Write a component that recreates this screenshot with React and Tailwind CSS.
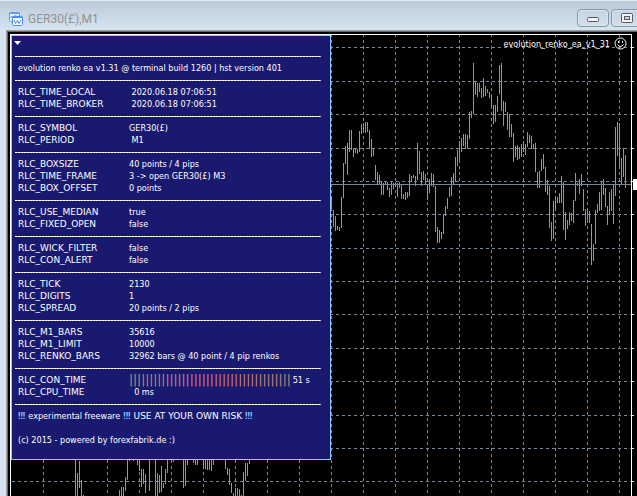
import { Fragment } from "react";

const GROUPS = [
  [
    ["RLC_TIME_LOCAL", " 2020.06.18 07:06:51"],
    ["RLC_TIME_BROKER", " 2020.06.18 07:06:51"],
  ],
  [
    ["RLC_SYMBOL", "GER30(£)"],
    ["RLC_PERIOD", " M1"],
  ],
  [
    ["RLC_BOXSIZE", "40 points / 4 pips"],
    ["RLC_TIME_FRAME", "3 -> open GER30(£) M3"],
    ["RLC_BOX_OFFSET", "0 points"],
  ],
  [
    ["RLC_USE_MEDIAN", "true"],
    ["RLC_FIXED_OPEN", "false"],
  ],
  [
    ["RLC_WICK_FILTER", "false"],
    ["RLC_CON_ALERT", "false"],
  ],
  [
    ["RLC_TICK", "2130"],
    ["RLC_DIGITS", "1"],
    ["RLC_SPREAD", "20 points / 2 pips"],
  ],
  [
    ["RLC_M1_BARS", "35616"],
    ["RLC_M1_LIMIT", "10000"],
    ["RLC_RENKO_BARS", "32962 bars @ 40 point / 4 pip renkos"],
  ],
  [
    ["RLC_CON_TIME", "51 s", 40],
    ["RLC_CPU_TIME", "  0 ms"],
  ],
];

// [high, low] of every M1 bar right of the panel, one bar each 2px
const BARS = [
  [197, 208], [210, 227], [216, 231], [226, 230], [227, 231], [197, 228], [163, 198], [146, 164],
  [143, 175], [130, 152], [130, 150], [148, 157], [148, 153], [149, 154], [131, 152], [124, 134],
  [123, 131], [122, 133], [122, 132], [130, 149], [139, 157], [149, 156], [165, 180], [172, 185],
  [175, 184], [181, 195], [183, 195], [182, 185], [182, 190], [188, 197], [182, 195], [183, 189],
  [182, 187], [183, 197], [182, 188], [185, 199], [194, 199], [192, 200], [192, 198], [174, 196],
  [176, 182], [175, 178], [176, 186], [143, 180], [151, 174], [172, 186], [171, 180], [174, 185],
  [185, 200], [179, 193], [173, 186], [174, 187], [186, 232], [227, 243], [230, 243], [232, 239],
  [214, 234], [206, 216], [198, 209], [187, 197], [177, 196], [173, 185], [157, 182], [150, 166],
  [141, 160], [138, 152], [134, 146], [134, 149], [135, 149], [112, 139], [111, 118], [63, 114],
  [81, 95], [83, 97], [83, 92], [88, 98], [78, 97], [86, 96], [89, 93], [92, 98],
  [95, 106], [105, 124], [105, 122], [96, 112], [65, 94], [63, 111], [101, 126], [102, 112],
  [112, 130], [114, 137], [124, 137], [133, 162], [146, 157], [145, 160], [147, 159], [144, 157],
  [141, 152], [144, 155], [132, 147], [135, 143], [136, 149], [144, 149], [143, 172], [172, 188],
  [171, 188], [159, 171], [154, 169], [167, 192], [180, 195], [186, 228], [222, 241], [201, 239],
  [197, 211], [197, 203], [193, 203], [176, 203], [182, 230], [212, 240], [220, 229], [212, 225],
  [213, 221], [200, 223], [173, 201], [183, 186], [179, 194], [174, 186], [189, 211], [209, 226],
  [209, 220], [211, 223], [224, 265], [244, 261], [210, 244], [204, 213], [192, 211], [182, 210],
  [179, 195], [188, 207], [206, 225], [192, 215], [189, 211], [184, 224], [127, 196], [122, 156],
  [123, 167], [158, 185], [148, 177], [155, 188],
];

// [x, high, low] of the bars that come out below the panel
const LOWER_BARS = [
  [75, 460, 500], [77, 473, 500], [79, 461, 488], [81, 480, 500], [83, 495, 500],
  [119, 490, 500], [121, 487, 500], [123, 487, 500], [125, 477, 491], [127, 455, 480],
  [129, 455, 461], [133, 455, 461], [137, 455, 465], [139, 455, 471], [141, 469, 487],
  [143, 469, 484], [145, 474, 493], [149, 455, 491], [155, 455, 500], [157, 473, 500],
  [159, 475, 493], [161, 466, 492], [163, 483, 488], [165, 469, 484], [167, 455, 473],
  [173, 455, 462], [183, 455, 488], [185, 455, 486], [187, 455, 465], [193, 455, 463],
  [195, 455, 465], [197, 455, 465], [203, 455, 469], [205, 455, 469], [207, 455, 470],
  [209, 455, 470], [211, 455, 471], [213, 455, 465], [225, 455, 469], [227, 468, 475],
  [229, 469, 485], [231, 483, 493], [233, 493, 500], [235, 488, 500], [237, 488, 500],
  [239, 489, 500], [241, 495, 500], [243, 472, 500], [245, 463, 481], [247, 463, 476],
  [249, 455, 464],
];

const GRID_X = [43, 75, 107, 139, 171, 203, 235, 267, 299, 331, 363, 395, 427, 459, 491, 523, 555, 587, 619];
const GRID_Y = [47, 81, 114, 148, 181, 214, 248, 281, 314, 348, 381, 415, 448, 481];
const PRICE_Y = 184;

// page position of the chart's top left corner, inside the white frame
const LEFT = 11;
const TOP = 35;

function ChartIcon() {
  return (
    <svg width="16" height="16" viewBox="0 0 16 16" fill="none" aria-hidden="true">
      <rect x="1.5" y="1.5" width="10" height="9" rx="1" fill="#e8f2ff" stroke="#5b9bf0" />
      <path d="M1 2.5h11" stroke="#5b9bf0" />
      <path d="M2.5 7l1.5-2 1.5 2 2-3 1.5 2" stroke="#5b9bf0" />
      <rect x="4.5" y="5.5" width="10" height="9" rx="1" fill="#f6faff" stroke="#4a8cec" />
      <path d="M4 6.5h11" stroke="#4a8cec" />
      <path d="M6 9l1.5 3.5 2-3 1.5 3 2-3.500" stroke="#4a8cec" />
    </svg>
  );
}

function WindowButton({ label, children }) {
  return (
    <button
      type="button"
      aria-label={label}
      className="flex h-[18px] w-8 shrink-0 items-center justify-center rounded-sm border border-[#8795ab] bg-linear-to-b from-[#c6d3e1] to-[#d3dfec] shadow-[inset_0_0_0_1px_#dae5f0]"
    >
      {children}
    </button>
  );
}

function TitleBar() {
  return (
    <header className="flex h-[30px] items-center border-t border-[#e3ebf3] bg-linear-to-b from-[#bccad9] to-[#d7e4f1] pt-1.5 pl-2">
      <ChartIcon />
      <h1 className="ml-1 flex-1 font-[Roboto,sans-serif] text-xs text-[#929292]">GER30(£),M1</h1>
      <div className="-mr-1.5 flex gap-0.5 pb-0.5">
        <WindowButton label="Minimize">
          <svg width="12" height="6" viewBox="0 0 12 6" className="mt-1">
            <rect x="0.5" y="0.5" width="11" height="4" rx="1" fill="#f4f4f4" stroke="#555a66" />
          </svg>
        </WindowButton>
        <WindowButton label="Maximize">
          <svg width="12" height="10" viewBox="0 0 12 10">
            <rect x="0.5" y="0.5" width="11" height="9" rx="1" fill="#f4f4f4" stroke="#555a66" />
            <rect x="3.5" y="3.5" width="5" height="3" fill="#c8d4e2" stroke="#555a66" />
          </svg>
        </WindowButton>
      </div>
    </header>
  );
}

function Bar({ x, high, low }) {
  return <rect x={x - LEFT} y={high - TOP} width="1" height={low - high} />;
}

function PriceChart() {
  return (
    <svg
      className="absolute inset-0 h-full w-full"
      shapeRendering="crispEdges"
      role="img"
      aria-label="GER30(£) M1 price chart"
    >
      <g stroke="#778899" strokeDasharray="3 3">
        {GRID_X.map((x) => (
          <line key={x} x1={x - LEFT + 0.5} x2={x - LEFT + 0.5} y1="-1" y2="100%" />
        ))}
        {GRID_Y.map((y) => (
          <line key={y} x1="1" x2="100%" y1={y - TOP + 0.5} y2={y - TOP + 0.5} />
        ))}
      </g>
      <g fill="#00ff00">
        {BARS.map(([high, low], i) => (
          <Bar key={i} x={331 + i * 2} high={high} low={low} />
        ))}
        {LOWER_BARS.map(([x, high, low]) => (
          <Bar key={x} x={x} high={high} low={low} />
        ))}
      </g>
      <rect x="0" y={PRICE_Y - TOP} width="100%" height="1" fill="#778899" />
    </svg>
  );
}

function PriceScale() {
  return (
    <svg className="w-[5px] shrink-0 self-stretch" shapeRendering="crispEdges" aria-hidden="true">
      {GRID_Y.map((y) => (
        <rect key={y} x="0" y={y - TOP + 1} width="2" height="1" fill="#fff" />
      ))}
      <rect x="1" y={PRICE_Y - TOP - 4} width="4" height="11" fill="#fff" />
    </svg>
  );
}

function Rule() {
  return (
    <div className="flex h-3 items-center pr-[9px] pl-[3px]">
      <hr className="h-px w-full border-0 bg-[repeating-linear-gradient(90deg,#fff_0_2px,#d0cabc_2px_3px)]" />
    </div>
  );
}

function Row({ label, value, ticks }) {
  return (
    <div className="flex h-3 items-center pl-1.5">
      <dt className="w-[111px] font-['DejaVu_Sans',sans-serif]">{label}</dt>
      <dd className="flex items-center">
        {ticks && (
          <span className="mr-0.5 font-['DejaVu_Sans',sans-serif] text-xs leading-3 text-[#d08878]">
            {"|".repeat(ticks)}
          </span>
        )}
        {value}
      </dd>
    </div>
  );
}

function Bangs() {
  return <span className="font-[Roboto,sans-serif] font-bold text-[#8cc8ff]">!!!</span>;
}

function InfoPanel() {
  return (
    <section className="relative w-80 border border-[#87cefa] bg-[#191970] pb-[13px] whitespace-pre">
      <div className="flex h-3.5 items-center pl-0.5">
        <button type="button" aria-label="Collapse panel">
          <svg width="7" height="4" viewBox="0 0 7 4">
            <path d="M0 0h7L3.5 4z" fill="#fff" />
          </svg>
        </button>
      </div>
      <Rule />
      <h2 className="pl-1.5">evolution renko ea v1.31 @ terminal build 1260 | hst version 401</h2>
      <dl>
        {GROUPS.map((rows) => (
          <Fragment key={rows[0][0]}>
            <Rule />
            {rows.map(([label, value, ticks]) => (
              <Row key={label} label={label} value={value} ticks={ticks} />
            ))}
          </Fragment>
        ))}
      </dl>
      <Rule />
      <p className="flex h-3 items-center gap-[3px] pl-1.5">
        <Bangs />
        <span>experimental freeware</span>
        <Bangs />
        <span className="font-['DejaVu_Sans',sans-serif]">USE AT YOUR OWN RISK</span>
        <Bangs />
      </p>
      <p className="mt-3 pl-1.5">(c) 2015 - powered by forexfabrik.de :)</p>
    </section>
  );
}

function ExpertName() {
  return (
    <div className="absolute top-0.5 right-1 flex items-center gap-1">
      <span>evolution_renko_ea_v1_31</span>
      <svg width="13" height="13" viewBox="0 0 13 13" fill="none" stroke="#fff" aria-hidden="true">
        <circle cx="6.5" cy="6.5" r="5.5" />
        <path d="M3.5 7.5q3 4 6 0" />
        <path d="M4.5 4v2M8.5 4v2" />
      </svg>
    </div>
  );
}

export default function App() {
  return (
    <div className="flex min-h-screen flex-col overflow-hidden bg-[#d7e4f1]">
      <TitleBar />
      <main className="ml-1.5 flex flex-1 border-t border-l border-[#a0a0a0]">
        <div className="flex flex-1 border-t border-l border-[#696969] bg-black pt-0.5 pl-0.5 font-['DejaVu_Sans_Condensed','DejaVu_Sans',sans-serif] text-[9px] leading-3 text-white">
          <div className="relative flex-1 border-t border-r border-l border-white">
            <PriceChart />
            <InfoPanel />
            <ExpertName />
          </div>
          <PriceScale />
        </div>
      </main>
    </div>
  );
}
